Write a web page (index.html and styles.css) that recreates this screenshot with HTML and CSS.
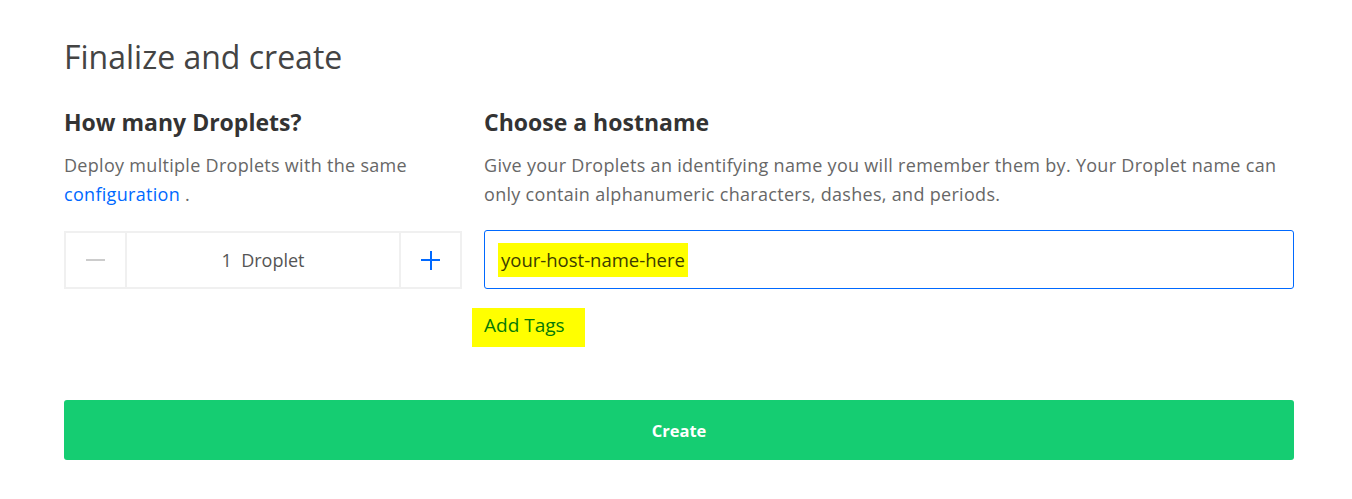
FILE: index.html
```html
<!DOCTYPE html>
<html>
<head>
<meta charset="utf-8">
<link rel="stylesheet" href="styles.css">
</head>
<body>
<div class="page">
  <h1 class="title">Finalize and create</h1>
  <div class="cols">
    <div class="col-left">
      <h2 class="heading">How many Droplets?</h2>
      <p class="desc">Deploy multiple Droplets with the same <a class="link" href="#">configuration</a> .</p>
      <div class="stepper">
        <div class="step-btn"><span class="minus"></span></div>
        <div class="step-value">1&nbsp; Droplet</div>
        <div class="step-btn"><span class="plus"></span></div>
      </div>
    </div>
    <div class="col-right">
      <h2 class="heading">Choose a hostname</h2>
      <p class="desc">Give your Droplets an identifying name you will remember them by. Your Droplet name can only contain alphanumeric characters, dashes, and periods.</p>
      <div class="host-input"><span class="hl">your-host-name-here</span></div>
      <div class="tags"><span class="tags-hl">Add Tags</span></div>
    </div>
  </div>
  <button class="create">Create</button>
</div>
</body>
</html>
```
FILE: styles.css
```css
html, body {
  margin: 0;
  padding: 0;
  background: #fff;
}
body {
  font-family: "Open Sans", Lato, "Liberation Sans", sans-serif;
  color: #444;
}
.page {
  padding: 37px 58px 0 64px;
  width: 1230px;
}
.title {
  margin: 0;
  font-size: 32px;
  font-weight: 400;
  line-height: 40px;
  color: #444;
}
.cols {
  display: flex;
  gap: 22px;
  margin-top: 30px;
}
.col-left {
  width: 398px;
  flex: none;
}
.col-right {
  flex: 1;
}
.heading {
  margin: 0;
  font-size: 23px;
  font-weight: 700;
  line-height: 30px;
  color: #333;
}
.desc {
  margin: 14px 0 0;
  font-size: 18px;
  letter-spacing: 0.3px;
  line-height: 29px;
  color: #676767;
}
.link {
  color: #0069ff;
  text-decoration: none;
}
.stepper {
  margin-top: 22px;
  display: flex;
  height: 54px;
  border: 2px solid #f0f0f0;
}
.step-btn {
  width: 59px;
  flex: none;
  display: flex;
  align-items: center;
  justify-content: center;
}
.step-value {
  flex: 1;
  display: flex;
  align-items: center;
  justify-content: center;
  border-left: 2px solid #f0f0f0;
  border-right: 2px solid #f0f0f0;
  font-size: 18px;
  color: #555;
}
.minus {
  width: 19px;
  height: 2px;
  background: #ccc;
}
.plus {
  position: relative;
  width: 19px;
  height: 19px;
}
.plus::before, .plus::after {
  content: "";
  position: absolute;
  background: #0069ff;
}
.plus::before {
  left: 0; right: 0; top: 8.5px; height: 2px;
}
.plus::after {
  top: 0; bottom: 0; left: 8.5px; width: 2px;
}
.host-input {
  margin-top: 21px;
  height: 57px;
  border: 1px solid #0069ff;
  border-radius: 3px;
  display: flex;
  align-items: center;
  padding-left: 13px;
}
.hl {
  background: #ffff00;
  color: #3c3c00;
  font-size: 18.5px;
  line-height: 34px;
  padding: 0 3px;
}
.tags {
  margin: 19px 0 0 -12px;
}
.tags-hl {
  display: inline-block;
  background: #ffff00;
  color: #067a06;
  font-size: 19px;
  line-height: 35px;
  padding: 0 20px 4px 12px;
}
.create {
  display: block;
  margin-top: 53px;
  width: 1230px;
  height: 60px;
  border: none;
  border-radius: 3px;
  background: #15cd72;
  color: #fff;
  font-family: "Open Sans", Lato, sans-serif;
  font-size: 16.5px;
  font-weight: 700;
}
```
